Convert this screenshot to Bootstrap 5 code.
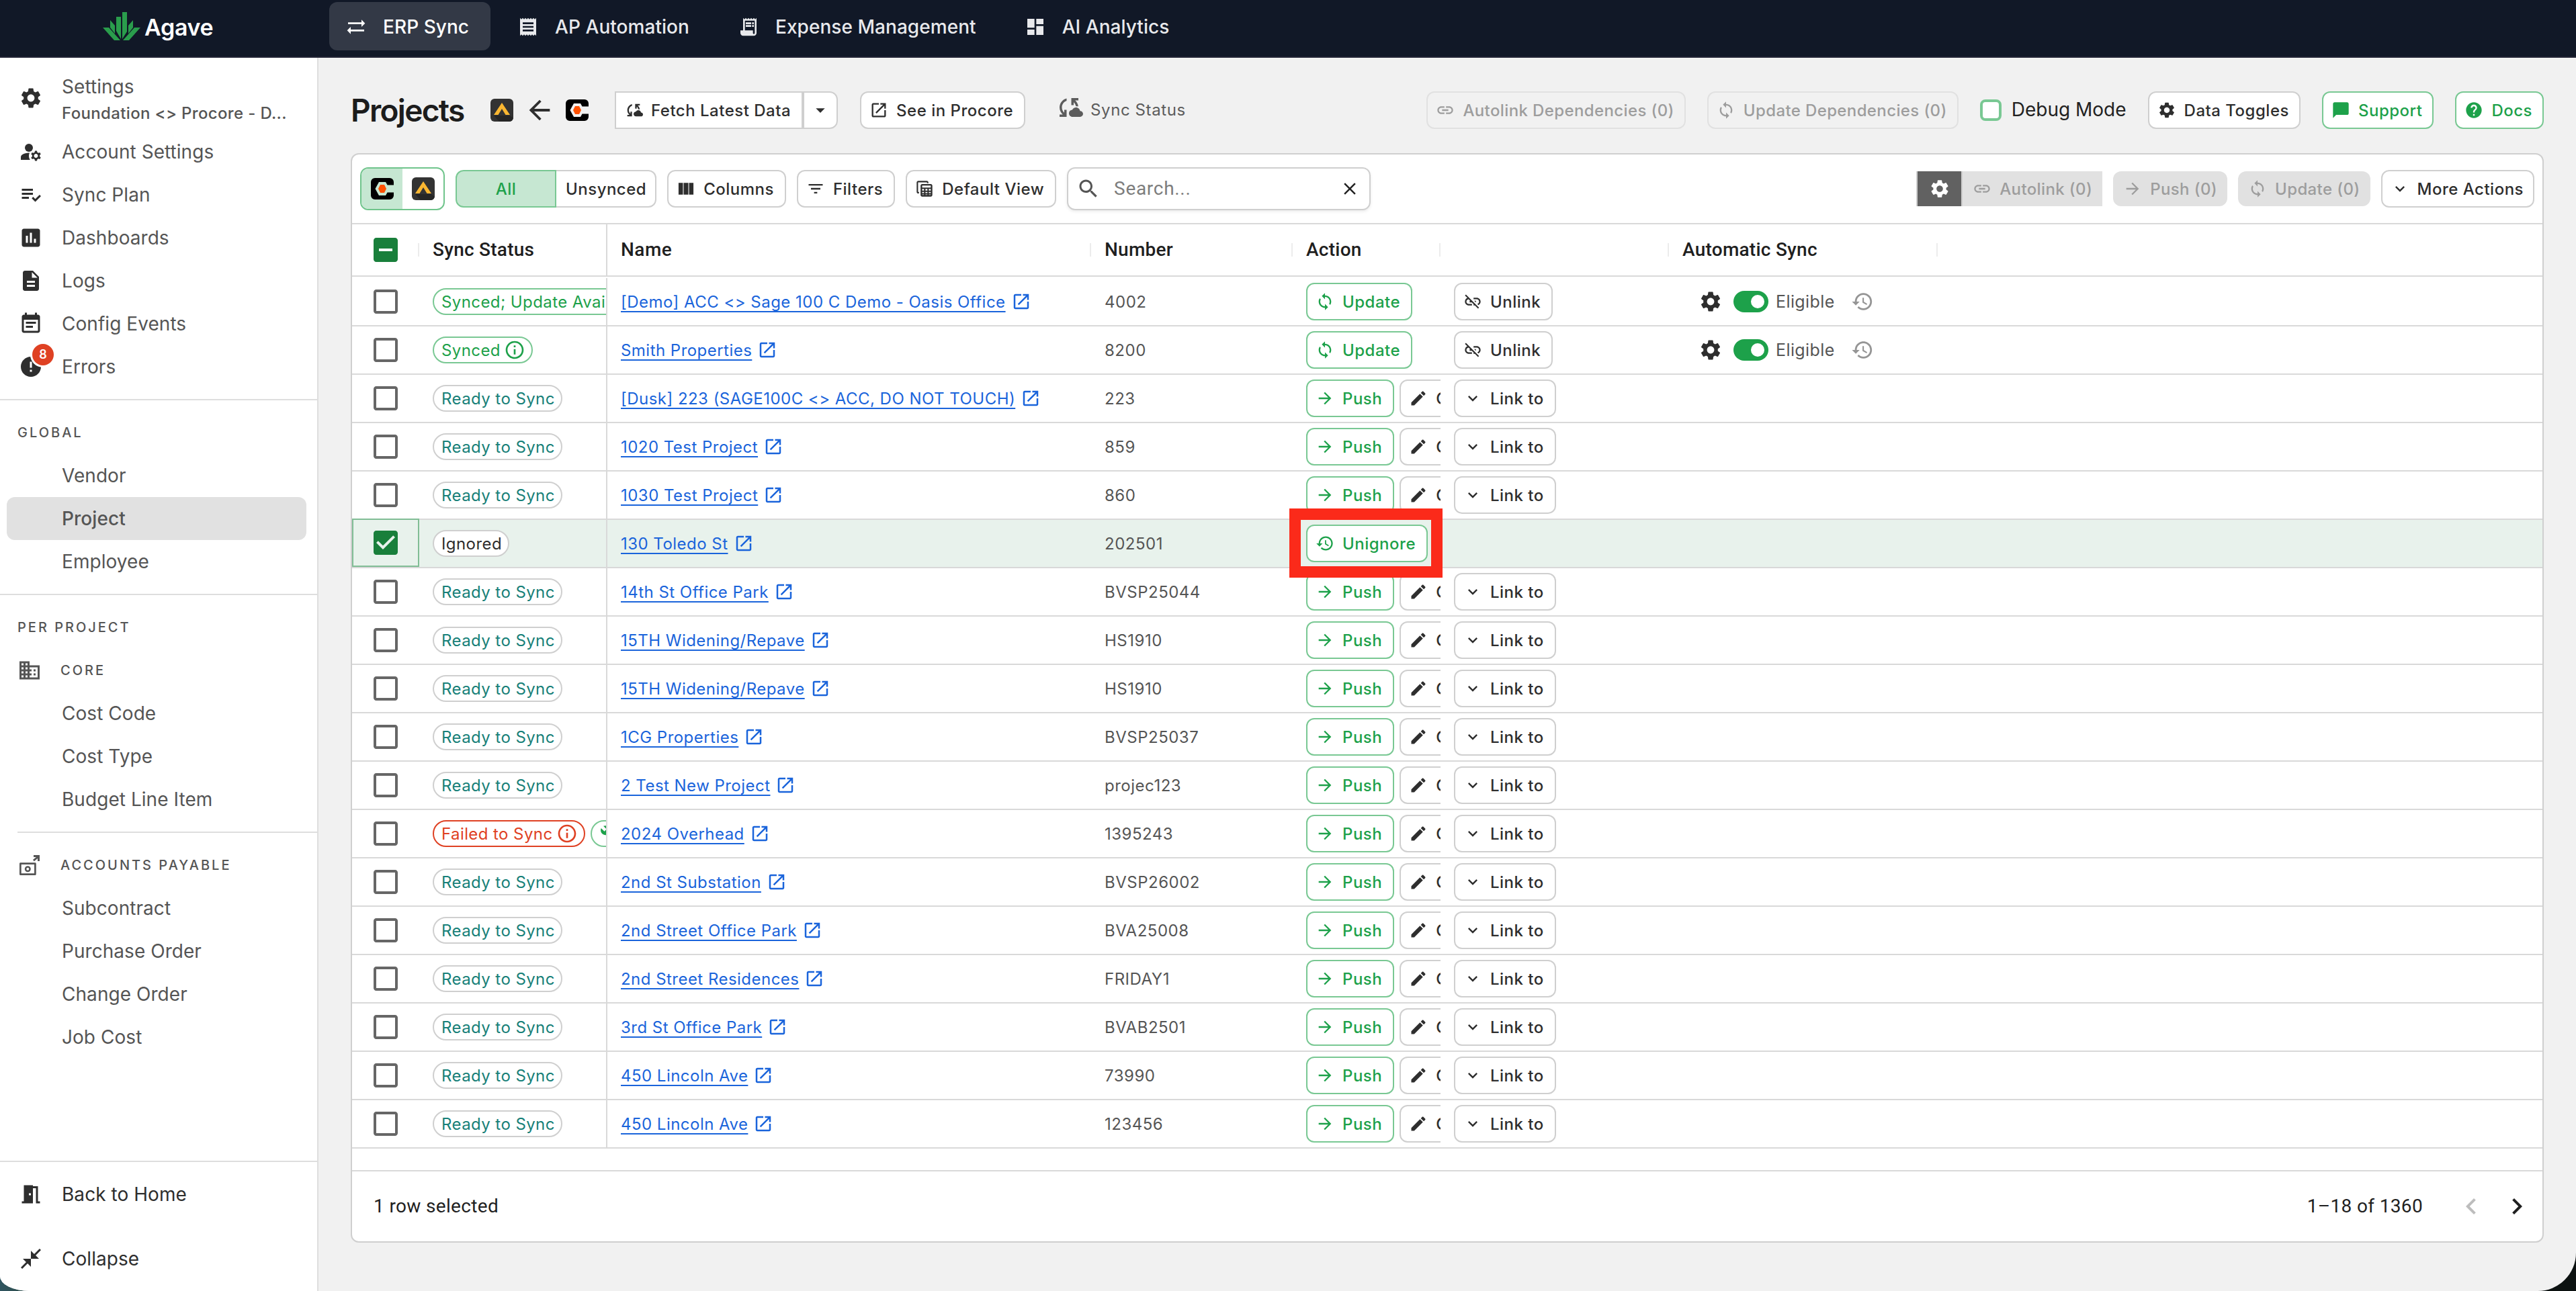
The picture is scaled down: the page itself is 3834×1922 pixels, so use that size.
<!DOCTYPE html>
<html lang="en">
<head>
    <meta charset="UTF-8">
    <meta name="viewport" content="width=device-width, initial-scale=1.0">
    <title>Agave - Projects</title>
    <link href="https://cdn.jsdelivr.net/npm/bootstrap@5.3.0/dist/css/bootstrap.min.css" rel="stylesheet">
    <style>
        html {
            background: linear-gradient(90deg, #2f5560 0, #2f4a40 60px, #0c1211 200px);
        }
        body {
            font-family: "Inter", "Roboto", sans-serif;
            font-size: 24px;
            line-height: 1.4;
            letter-spacing: 0.5px;
            color: #2e2e2e;
            background: transparent;
        }
        svg {
            display: block;
            flex: none;
            fill: currentColor;
        }
        .app {
            height: 1922px;
            background: #f1f1f1;
            border-radius: 0 0 57px 44px / 0 0 57px 22px;
            overflow: hidden;
        }

        /* Top navigation */
        .topbar {
            height: 86px;
            padding: 0 0 6px 153px;
            background: #111827;
            border-bottom: 2px solid #232536;
            color: #e8e9ec;
        }
        .brand {
            width: 337px;
            color: #fff;
            font-size: 34px;
            font-weight: 600;
            letter-spacing: -0.3px;
        }
        .brand span {
            margin: 3px 0 0 6px;
        }
        .topbar .nav-pill {
            height: 72px;
            padding: 3px 32px 0 24px;
            gap: 24px;
            border-radius: 12px;
            font-size: 28px;
            font-weight: 500;
            letter-spacing: 0.05px;
            color: inherit;
            text-decoration: none;
        }
        .topbar .nav-pill svg {
            margin-top: -2px;
        }
        .topbar .nav-pill.active {
            background: #333946;
            color: #fff;
        }

        /* Sidebar */
        .sidebar {
            width: 474px;
            padding-top: 12px;
            background: #fff;
            border-right: 2px solid #dedede;
            font-size: 28px;
            letter-spacing: 0.05px;
            color: #555;
        }
        .side-item {
            height: 64px;
            padding: 2px 0 0 28px;
            gap: 28px;
        }
        .side-item svg {
            margin-top: -2px;
            color: #2e2e2e;
        }
        .side-item.settings {
            height: 96px;
            padding-top: 5px;
        }
        .side-item.settings svg {
            margin-top: -5px;
        }
        .settings small {
            display: block;
            font-size: 24px;
            font-weight: 500;
            letter-spacing: 0.35px;
            line-height: 40px;
        }
        .settings div {
            line-height: 40px;
        }
        .side-sub {
            padding-left: 92px;
        }
        .side-sub.active {
            margin: 0 16px 0 10px;
            padding-left: 82px;
            border-radius: 12px;
            background: #e1e1e1;
            font-weight: 500;
        }
        .side-head {
            height: 64px;
            padding-left: 26px;
            gap: 28px;
            font-size: 20px;
            font-weight: 500;
            letter-spacing: 3px;
        }
        .side-rule {
            height: 2px;
            margin: 16px 0;
            background: #dedede;
        }
        .side-rule.inset {
            margin-left: 26px;
        }
        .side-foot {
            border-top: 2px solid #dedede;
            padding: 16px 0;
            gap: 32px;
            color: #2e2e2e;
        }
        .count {
            top: -18px;
            left: 20px;
            width: 32px;
            height: 32px;
            border-radius: 50%;
            background: #df4123;
            color: #fff;
            font-size: 18px;
            font-weight: 600;
            line-height: 32px;
            text-align: center;
            box-shadow: 0 0 0 3px #fff;
        }

        /* Page header */
        .page {
            padding: 50px 48px 72px;
        }
        .page-head {
            height: 56px;
            margin-bottom: 36px;
        }
        .page-head h1 {
            width: 208px;
            margin: 2px 0 0;
            font-size: 46px;
            font-weight: 600;
            letter-spacing: -1.7px;
            color: #1c1c1c;
        }
        .head-left {
            margin-left: 39px;
        }
        .head-right {
            gap: 32px;
        }
        .tool-btn {
            --bs-btn-disabled-opacity: 1;
            display: inline-flex;
            align-items: center;
            flex: none;
            height: 56px;
            padding: 2px 16px 0 12px;
            gap: 12px;
            border: 2px solid #cfcfcf;
            border-radius: 12px;
            background: #fff;
            color: #2e2e2e;
            font-size: 24px;
            font-weight: 500;
            letter-spacing: 0.5px;
            white-space: nowrap;
        }
        .tool-btn svg {
            margin-top: -2px;
        }
        .tool-btn.green {
            border-color: #79c893;
            color: #1da14a;
        }
        .tool-btn.off {
            border-color: #e1e1e1;
            color: #9d9d9d;
            letter-spacing: 0.38px;
        }
        .tool-btn.solid {
            height: 52px;
            padding: 2px 15px 0 15px;
            border: 0;
            background: #e1e1e1;
        }
        .head-right .tool-btn {
            padding-right: 15px;
        }
        .tool-btn.more-btn {
            padding-right: 14px;
        }
        .tool-btn.fetch-btn {
            border-radius: 0;
        }
        .tool-btn.caret-btn {
            padding-left: 8px;
            padding-right: 8px;
            border-radius: 0 12px 12px 0;
        }
        .tool-btn.see-btn {
            margin-left: 33px;
        }
        .tool-btn.all-btn {
            width: 150px;
            padding-left: 16px;
            border-radius: 12px 0 0 12px;
            background: #c6e7d2;
        }
        .tool-btn.unsynced-btn {
            padding-left: 14px;
            padding-right: 13px;
            border-left: 0;
            border-radius: 0 12px 12px 0;
        }
        .status {
            margin-left: 44px;
            gap: 11px;
            letter-spacing: 0.6px;
            color: #5c5c5c;
        }
        .status svg {
            margin-top: -9px;
        }
        .debug {
            gap: 15px;
            font-size: 28px;
            letter-spacing: 0;
            color: #222;
        }
        .debug i {
            width: 32px;
            height: 32px;
            border: 4px solid #79c893;
            border-radius: 8px;
            background: #fff;
        }

        /* Grid card */
        .grid-card {
            height: 1622px;
            border: 2px solid #cfcfcf;
            border-radius: 12px;
            background: #fff;
            overflow: hidden;
        }
        .toolbar {
            height: 104px;
            padding: 0 12px;
            gap: 16px;
            border-bottom: 2px solid #d9d9d9;
        }
        .side-toggle {
            width: 126px;
            height: 64px;
            border: 2px solid #6fc48b;
            border-radius: 12px;
            overflow: hidden;
        }
        .side-toggle .on {
            background: #c6e7d2;
        }
        .search {
            width: 452px;
            height: 64px;
            padding: 0 14px 0 12px;
            border: 2px solid #cfcfcf;
            border-radius: 12px;
            box-shadow: 0 2px 4px rgba(0, 0, 0, .08);
            font-family: "Roboto", sans-serif;
            font-size: 28px;
            letter-spacing: 0.7px;
            color: #7d7d7d;
        }
        .gear-btn {
            width: 69px;
            height: 52px;
            border: solid #cfcfcf;
            border-width: 0 2px;
            background: #616161;
            color: #fff;
        }
        .col-head {
            height: 78px;
            border-bottom: 2px solid #d9d9d9;
            font-family: "Roboto", sans-serif;
            font-size: 28px;
            font-weight: 500;
            letter-spacing: 0.25px;
            color: #1f1f1f;
        }
        .g-row {
            height: 72px;
            border-top: 2px solid #d9d9d9;
        }
        .g-row:first-child {
            border-top-color: transparent;
        }
        .g-row.picked {
            background: #e8f2ec;
            background-clip: padding-box;
        }
        .g-cell {
            position: relative;
            display: flex;
            align-items: center;
            flex: none;
            gap: 8px;
            padding: 0 20px;
            overflow: hidden;
            white-space: nowrap;
        }
        .c-check { width: 100px; padding: 0; justify-content: center; color: #666; }
        .c-status { width: 280px; border-right: 2px solid #d9d9d9; padding-right: 0; }
        .c-name { width: 720px; letter-spacing: 0.47px; }
        .c-number { width: 300px; color: #555; }
        .c-action { width: 220px; padding-right: 0; }
        .c-more { width: 340px; }
        .c-auto { width: 400px; padding-left: 44px; }
        #rows .c-name, #rows .c-number { padding-top: 2px; }
        .col-head .c-number { color: inherit; }
        .col-head .c-auto { padding-left: 20px; }
        .col-head .sep::after {
            content: "";
            position: absolute;
            right: 0;
            width: 2px;
            height: 20px;
            background: #ececec;
        }
        .picked .c-check {
            margin-top: -2px;
            border: 2px solid #80bd95;
        }
        .c-check .on {
            color: #197f3b;
        }
        .chip {
            display: inline-flex;
            align-items: center;
            flex: none;
            height: 40px;
            padding: 1px 9px 0 11px;
            gap: 4px;
            border: 2px solid #cfcfcf;
            border-radius: 20px;
            background: #fff;
            letter-spacing: 0.42px;
        }
        .chip.ready { color: #178078; }
        .chip.synced { color: #1da14a; border-color: #79c893; }
        .chip.failed { color: #df4123; border-color: #df4123; }
        .chip.wide { width: 320px; }
        .chip svg { margin: -1px 0 0 1px; }
        .c-name a {
            color: #1a64db;
            text-decoration-thickness: 2px;
            text-underline-offset: 5px;
            text-decoration-skip-ink: none;
        }
        .c-name svg {
            margin-top: -2px;
            color: #1a64db;
        }
        .edit-btn {
            width: 160px;
        }
        .switch {
            width: 52px;
            height: 32px;
            padding: 6px;
            margin: 0 3px 0 8px;
            border-radius: 16px;
            background: #1da14a;
        }
        .switch i {
            display: block;
            width: 20px;
            height: 20px;
            margin-left: auto;
            border-radius: 50%;
            background: #fff;
        }
        .eligible {
            width: 88px;
            margin-right: 16px;
            font-size: 25px;
            letter-spacing: 0.4px;
            color: #555;
        }
        /* Callout frame drawn over the grid */
        .callout {
            position: absolute;
            top: -17px;
            left: 1395px;
            width: 228px;
            height: 103px;
            border: 17px solid #fb2a1a;
            z-index: 2;
        }
        .grid-gap {
            height: 36px;
            border: solid #d9d9d9;
            border-width: 2px 0;
        }
        .grid-foot {
            padding: 0 14px 0 32px;
            font-family: "Roboto", sans-serif;
            font-size: 28px;
            letter-spacing: 0.35px;
            color: #1f1f1f;
        }
        .next-page {
            margin-left: 20px;
        }
    </style>
</head>
<body>
    <!-- Icon sprite -->
    <svg width="0" height="0" class="position-absolute">
        <symbol id="settings" viewBox="0 0 24 24"><path d="M19.14 12.94c.04-.3.06-.61.06-.94 0-.32-.02-.64-.07-.94l2.03-1.58c.18-.14.23-.41.12-.61l-1.92-3.32c-.12-.22-.37-.29-.59-.22l-2.39.96c-.5-.38-1.03-.7-1.62-.94L14.4 2.81c-.04-.24-.24-.41-.48-.41h-3.84c-.24 0-.43.17-.47.41L9.25 5.35c-.59.24-1.13.57-1.62.94L5.24 5.33c-.22-.08-.47 0-.59.22L2.74 8.87c-.12.21-.08.47.12.61l2.03 1.58c-.05.3-.09.63-.09.94s.02.64.07.94l-2.03 1.58c-.18.14-.23.41-.12.61l1.92 3.32c.12.22.37.29.59.22l2.39-.96c.5.38 1.03.7 1.62.94l.36 2.54c.05.24.24.41.48.41h3.84c.24 0 .44-.17.47-.41l.36-2.54c.59-.24 1.13-.56 1.62-.94l2.39.96c.22.08.47 0 .59-.22l1.92-3.32c.12-.22.07-.47-.12-.61l-2.01-1.58zM12 15.6c-1.98 0-3.6-1.62-3.6-3.6s1.62-3.6 3.6-3.6 3.6 1.62 3.6 3.6-1.62 3.6-3.6 3.6z"/></symbol>
        <symbol id="account" viewBox="0 0 24 24"><circle cx="10" cy="8" r="4"/><path d="M10.67 13.02c-.22-.01-.44-.02-.67-.02-2.42 0-4.68.67-6.61 1.82-.88.52-1.39 1.5-1.39 2.53V20h9.26c-.79-1.13-1.26-2.51-1.26-4 0-1.07.25-2.07.67-2.98zM20.75 16c0-.22-.03-.42-.06-.63l1.14-1.01-1-1.73-1.45.49c-.32-.27-.68-.48-1.08-.63L18 11h-2l-.3 1.49c-.4.15-.76.36-1.08.63l-1.45-.49-1 1.73 1.14 1.01c-.03.21-.06.41-.06.63s.03.42.06.63l-1.14 1.01 1 1.73 1.45-.49c.32.27.68.48 1.08.63L16 21h2l.3-1.49c.4-.15.76-.36 1.08-.63l1.45.49 1-1.73-1.14-1.01c.03-.21.06-.41.06-.63zM17 18c-1.1 0-2-.9-2-2s.9-2 2-2 2 .9 2 2-.9 2-2 2z"/></symbol>
        <symbol id="plan" viewBox="0 0 24 24"><path d="M3 10h11v2H3zM3 6h11v2H3zM3 14h7v2H3zM20.59 11.93l-4.25 4.24-2.12-2.12-1.41 1.41L16.34 19 22 13.34z"/></symbol>
        <symbol id="chart" viewBox="0 0 24 24"><path d="M19 3H5c-1.1 0-2 .9-2 2v14c0 1.1.9 2 2 2h14c1.1 0 2-.9 2-2V5c0-1.1-.9-2-2-2zM9 17H7v-7h2v7zm4 0h-2V7h2v10zm4 0h-2v-4h2v4z"/></symbol>
        <symbol id="file" viewBox="0 0 24 24"><path d="M14 2H6c-1.1 0-1.99.9-1.99 2L4 20c0 1.1.89 2 1.99 2H18c1.1 0 2-.9 2-2V8l-6-6zm2 16H8v-2h8v2zm0-4H8v-2h8v2zm-3-5V3.5L18.5 9H13z"/></symbol>
        <symbol id="event" viewBox="0 0 24 24"><path d="M19 3h-1V1h-2v2H8V1H6v2H5c-1.1 0-2 .9-2 2v14c0 1.1.9 2 2 2h14c1.1 0 2-.9 2-2V5c0-1.1-.9-2-2-2zm0 16H5V8h14v11zM7 10h10v2H7zM7 14h7v2H7z"/></symbol>
        <symbol id="error" viewBox="0 0 24 24"><path d="M12 2C6.48 2 2 6.48 2 12s4.48 10 10 10 10-4.48 10-10S17.52 2 12 2zm1 15h-2v-2h2v2zm0-4h-2V7h2v6z"/></symbol>
        <symbol id="building" viewBox="0 0 24 24"><path d="M12 7V3H2v18h20V7H12zM6 19H4v-2h2v2zm0-4H4v-2h2v2zm0-4H4V9h2v2zm0-4H4V5h2v2zm4 12H8v-2h2v2zm0-4H8v-2h2v2zm0-4H8V9h2v2zm0-4H8V5h2v2zm10 12h-8v-2h2v-2h-2v-2h2v-2h-2V9h8v10zm-2-8h-2v2h2v-2zm0 4h-2v2h2v-2z"/></symbol>
        <symbol id="payable" viewBox="0 0 24 24"><path fill-rule="evenodd" d="M2 10.5c0-.6.4-1 1-1h14.5c.6 0 1 .4 1 1V21c0 .6-.4 1-1 1H3c-.6 0-1-.4-1-1zm1.800.8v8.900h12.900v-8.900zM10.200 12.800a3 3 0 1 1 0 6 3 3 0 0 1 0-6zm0 1.700a1.300 1.300 0 1 0 0 2.600 1.300 1.300 0 0 0 0-2.600zM16 2h6v6h-2V5.400l-3.400 2.800-1.300-1.500L18.600 4H16z"/></symbol>
        <symbol id="door" viewBox="0 0 24 24"><path d="M14 6v15H3v-2h2V3h9v1h5v15h2v2h-4V6h-3zm-4 5v2h2v-2h-2z"/></symbol>
        <symbol id="shrink" viewBox="0 0 24 24"><path d="M22 3.41 16.71 8.7 20 12h-8V4l3.29 3.29L20.59 2 22 3.41zM3.41 22l5.29-5.29L12 20v-8H4l3.29 3.29L2 20.59 3.41 22z"/></symbol>
        <symbol id="swap" viewBox="0 0 24 24"><path d="m18 12 4-4-4-4v3H3v2h15zM6 12l-4 4 4 4v-3h15v-2H6z"/></symbol>
        <symbol id="receipt" viewBox="0 0 24 24"><path d="M18 17H6v-2h12v2zm0-4H6v-2h12v2zm0-4H6V7h12v2zM3 22l1.5-1.5L6 22l1.5-1.5L9 22l1.5-1.5L12 22l1.5-1.5L15 22l1.5-1.5L18 22l1.5-1.5L21 22V2l-1.5 1.5L18 2l-1.5 1.5L15 2l-1.5 1.5L12 2l-1.5 1.5L9 2 7.5 3.5 6 2 4.5 3.5 3 2v20z"/></symbol>
        <symbol id="expense" viewBox="0 0 24 24"><path d="M19.5 3.5 18 2l-1.5 1.5L15 2l-1.5 1.5L12 2l-1.5 1.5L9 2 7.5 3.5 6 2v14H3v3c0 1.66 1.34 3 3 3h12c1.66 0 3-1.34 3-3V2l-1.5 1.5zM19 19c0 .55-.45 1-1 1s-1-.45-1-1v-3H8V5h11v14zM9 7h6v2H9zM16 7h2v2h-2zM9 10h6v2H9zM16 10h2v2h-2z"/></symbol>
        <symbol id="dash" viewBox="0 0 24 24"><path d="M3 13h8V3H3v10zm0 8h8v-6H3v6zm10 0h8V11h-8v10zm0-18v6h8V3h-8z"/></symbol>
        <symbol id="sync" viewBox="0 0 24 24"><path d="M12 4V1L8 5l4 4V6c3.31 0 6 2.69 6 6 0 1.01-.25 1.97-.7 2.8l1.46 1.46C19.54 15.03 20 13.57 20 12c0-4.42-3.58-8-8-8zm0 14c-3.31 0-6-2.69-6-6 0-1.01.25-1.97.7-2.8L5.24 7.74C4.46 8.97 4 10.43 4 12c0 4.42 3.58 8 8 8v3l4-4-4-4v3z"/></symbol>
        <symbol id="link" viewBox="0 0 24 24"><path d="M3.9 12c0-1.71 1.39-3.1 3.1-3.1h4V7H7c-2.76 0-5 2.24-5 5s2.24 5 5 5h4v-1.9H7c-1.71 0-3.1-1.39-3.1-3.1zM8 13h8v-2H8v2zm9-6h-4v1.9h4c1.71 0 3.1 1.39 3.1 3.1s-1.39 3.1-3.1 3.1h-4V17h4c2.76 0 5-2.24 5-5s-2.24-5-5-5z"/></symbol>
        <symbol id="unlink" viewBox="0 0 24 24"><path d="M17 7h-4v1.9h4c1.71 0 3.1 1.39 3.1 3.1 0 1.43-.98 2.63-2.31 2.98l1.46 1.46C20.88 15.61 22 13.95 22 12c0-2.76-2.24-5-5-5zm-1 4h-2.19l2 2H16v-2zM2 4.27l3.11 3.11C3.29 8.12 2 9.91 2 12c0 2.76 2.24 5 5 5h4v-1.9H7c-1.71 0-3.1-1.39-3.1-3.1 0-1.59 1.21-2.9 2.76-3.07L8.73 11H8v2h2.73L13 15.27V17h1.73l4.01 4L20 19.74 3.27 3 2 4.27z"/></symbol>
        <symbol id="right" viewBox="0 0 24 24"><path d="M12 4l-1.41 1.41L16.17 11H4v2h12.17l-5.58 5.59L12 20l8-8z"/></symbol>
        <symbol id="left" viewBox="0 0 24 24"><path d="M20 11H7.83l5.59-5.59L12 4l-8 8 8 8 1.41-1.41L7.83 13H20v-2z"/></symbol>
        <symbol id="pencil" viewBox="0 0 24 24"><path d="M3 17.25V21h3.75L17.81 9.94l-3.75-3.75L3 17.25zM20.71 7.04c.39-.39.39-1.02 0-1.41l-2.34-2.34c-.39-.39-1.02-.39-1.41 0l-1.83 1.83 3.75 3.75 1.83-1.83z"/></symbol>
        <symbol id="down" viewBox="0 0 24 24"><path d="M16.59 8.59 12 13.17 7.41 8.59 6 10l6 6 6-6z"/></symbol>
        <symbol id="caret" viewBox="0 0 24 24"><path d="M7 10l5 5 5-5z"/></symbol>
        <symbol id="open" viewBox="0 0 24 24"><path d="M19 19H5V5h7V3H5c-1.11 0-2 .9-2 2v14c0 1.1.89 2 2 2h14c1.1 0 2-.9 2-2v-7h-2v7zM14 3v2h3.59l-9.83 9.83 1.41 1.41L19 6.41V10h2V3h-7z"/></symbol>
        <symbol id="info" viewBox="0 0 24 24"><path d="M11 7h2v2h-2zm0 4h2v6h-2zm1-9C6.48 2 2 6.48 2 12s4.48 10 10 10 10-4.48 10-10S17.52 2 12 2zm0 18c-4.41 0-8-3.59-8-8s3.59-8 8-8 8 3.59 8 8-3.59 8-8 8z"/></symbol>
        <symbol id="history" viewBox="0 0 24 24"><path d="M13 3c-4.97 0-9 4.03-9 9H1l3.89 3.89.07.14L9 12H6c0-3.87 3.13-7 7-7s7 3.13 7 7-3.13 7-7 7c-1.93 0-3.68-.79-4.94-2.06l-1.42 1.42C8.27 19.99 10.51 21 13 21c4.97 0 9-4.03 9-9s-4.03-9-9-9zm-1 5v5l4.28 2.54.72-1.21-3.5-2.08V8H12z"/></symbol>
        <symbol id="chat" viewBox="0 0 24 24"><path d="M20 2H4c-1.1 0-2 .9-2 2v18l4-4h14c1.1 0 2-.9 2-2V4c0-1.1-.9-2-2-2z"/></symbol>
        <symbol id="help" viewBox="0 0 24 24"><path d="M12 2C6.48 2 2 6.48 2 12s4.48 10 10 10 10-4.48 10-10S17.52 2 12 2zm1 17h-2v-2h2v2zm2.07-7.75-.9.92C13.45 12.9 13 13.5 13 15h-2v-.5c0-1.1.45-2.1 1.17-2.83l1.24-1.26c.37-.36.59-.86.59-1.41 0-1.1-.9-2-2-2s-2 .9-2 2H8c0-2.21 1.79-4 4-4s4 1.79 4 4c0 .88-.36 1.68-.93 2.25z"/></symbol>
        <symbol id="cloud" viewBox="0 0 24 24"><path d="M21.5 14.98c-.02 0-.03 0-.05.01C21.2 13.3 19.76 12 18 12c-1.4 0-2.6.83-3.16 2.02C13.26 14.1 12 15.4 12 17c0 1.66 1.34 3 3 3l6.5-.02c1.38 0 2.5-1.12 2.5-2.5s-1.12-2.5-2.5-2.5zM10 4.26v2.09C7.67 7.18 6 9.39 6 12c0 1.77.78 3.34 2 4.44V14h2v6H4v-2h2.73C5.06 16.54 4 14.4 4 12c0-3.73 2.55-6.85 6-7.74zM20 6h-2.73c1.43 1.26 2.41 3.01 2.66 5h-2.02c-.23-1.36-.93-2.55-1.91-3.44V10h-2V4h6v2z"/></symbol>
        <symbol id="columns" viewBox="0 0 24 24"><path d="M2.5 4.5h5.6v15H2.5zM9 4.5h6v15H9zM15.9 4.5h5.6v15h-5.6z"/></symbol>
        <symbol id="filter" viewBox="0 0 24 24"><path d="M10 18h4v-2h-4v2zM3 6v2h18V6H3zm3 7h12v-2H6v2z"/></symbol>
        <symbol id="views" viewBox="0 0 24 24"><path fill-rule="evenodd" d="M9 6h11c1.1 0 2 .9 2 2v12c0 1.1-.9 2-2 2H9c-1.1 0-2-.9-2-2V8c0-1.1.9-2 2-2zm0 2v2.4h11V8zM9 12.3v2h2.4v-2zm4.2 0v2h2.5v-2zm4.3 0v2H20v-2zM9 16v1.6h2.4V16zm4.2 0v1.6h2.5V16zm4.3 0v1.6H20V16zM9 19.2v.8h2.4v-.8zm4.2 0v.8h2.5v-.8zm4.3 0v.8H20v-.8zM2 4c0-1.1.9-2 2-2h11c1.1 0 2 .9 2 2v1h-1.800V3.800H3.800V16H5v2H4c-1.100 0-2-.9-2-2z"/></symbol>
        <symbol id="search" viewBox="0 0 24 24"><path d="M15.5 14h-.79l-.28-.27C15.41 12.59 16 11.11 16 9.5 16 5.91 13.09 3 9.5 3S3 5.91 3 9.5 5.91 16 9.5 16c1.61 0 3.09-.59 4.23-1.57l.27.28v.79l5 4.99L20.49 19l-4.99-5zm-6 0C7.01 14 5 11.99 5 9.5S7.01 5 9.5 5 14 7.01 14 9.5 11.99 14 9.5 14z"/></symbol>
        <symbol id="close" viewBox="0 0 24 24"><path d="M19 6.41 17.59 5 12 10.59 6.41 5 5 6.41 10.59 12 5 17.59 6.41 19 12 13.41 17.59 19 19 17.59 13.41 12z"/></symbol>
        <symbol id="box" viewBox="0 0 24 24"><path d="M19 5v14H5V5h14m0-2H5c-1.1 0-2 .9-2 2v14c0 1.1.9 2 2 2h14c1.1 0 2-.9 2-2V5c0-1.1-.9-2-2-2z"/></symbol>
        <symbol id="box-on" viewBox="0 0 24 24"><path d="M19 3H5c-1.11 0-2 .9-2 2v14c0 1.1.89 2 2 2h14c1.11 0 2-.9 2-2V5c0-1.1-.89-2-2-2zm-9 14-5-5 1.41-1.41L10 14.17l7.59-7.59L19 8l-9 9z"/></symbol>
        <symbol id="box-some" viewBox="0 0 24 24"><path d="M19 3H5c-1.1 0-2 .9-2 2v14c0 1.1.9 2 2 2h14c1.1 0 2-.9 2-2V5c0-1.1-.9-2-2-2zm-2 10H7v-2h10v2z"/></symbol>
        <symbol id="prev" viewBox="0 0 24 24"><path d="M15.41 7.41 14 6l-6 6 6 6 1.41-1.41L10.83 12z"/></symbol>
        <symbol id="next" viewBox="0 0 24 24"><path d="M10 6 8.59 7.41 13.17 12l-4.58 4.59L10 18l6-6z"/></symbol>
        <symbol id="wrench" viewBox="0 0 24 24"><path d="m22.7 19-9.1-9.1c.9-2.3.4-5-1.5-6.9-2-2-5-2.4-7.4-1.3L9 6 6 9 1.6 4.7C.4 7.1.9 10.1 2.9 12.1c1.9 1.9 4.6 2.4 6.9 1.5l9.1 9.1c.4.4 1 .4 1.4 0l2.3-2.3c.5-.4.5-1.1.1-1.4z"/></symbol>
        <symbol id="procore" viewBox="0 0 34 34"><path fill="#000" d="M6 1h22a6 6 0 0 1 6 6v4.5h-9.5L22 7H12L6.5 17 12 27h10l2.5-4.5H34V27a6 6 0 0 1-6 6H6a6 6 0 0 1-6-6V7a6 6 0 0 1 6-6z"/><path fill="#ff5100" d="M11 17l3-6h6l3 6-3 6h-6z"/></symbol>
        <symbol id="foundation" viewBox="0 0 34 34"><rect width="34" height="34" rx="6" fill="#333"/><path fill="#262626" d="M5 25h24l5 4v-1a6 6 0 0 1-6 6H13z"/><path fill="#fbb731" d="M17 6l12 18h-6.5L17 15l-5.5 9H5z"/></symbol>
    </svg>

    <div class="app d-flex flex-column">
        <nav class="topbar d-flex align-items-center">
            <div class="brand d-flex align-items-center">
                <svg width="56" height="42" viewBox="0 0 56 42"><path fill="#2a9d4c" d="M29 0h7v29l-7 11zM20 7h7v33l-7-12zM11 12l7 8v12l-7-9zM45 12l-7 8v12l7-9zM0 23h9l17 19h-9zM56 23h-9L30 42h9z"/></svg>
                <span>Agave</span>
            </div>
            <div class="d-flex gap-3">
                <a class="nav-pill active d-flex align-items-center"><svg width="32" height="32"><use href="#swap"/></svg>ERP Sync</a>
                <a class="nav-pill d-flex align-items-center"><svg width="32" height="32"><use href="#receipt"/></svg>AP Automation</a>
                <a class="nav-pill d-flex align-items-center"><svg width="32" height="32"><use href="#expense"/></svg>Expense Management</a>
                <a class="nav-pill d-flex align-items-center"><svg width="32" height="32"><use href="#dash"/></svg>AI Analytics</a>
            </div>
        </nav>

        <div class="d-flex flex-grow-1">
            <aside class="sidebar d-flex flex-column flex-shrink-0">
                <div class="side-item settings d-flex align-items-center"><svg width="36" height="36"><use href="#settings"/></svg><div>Settings<small>Foundation &lt;&gt; Procore - D...</small></div></div>
                <div class="side-item d-flex align-items-center"><svg width="36" height="36"><use href="#account"/></svg>Account Settings</div>
                <div class="side-item d-flex align-items-center"><svg width="36" height="36"><use href="#plan"/></svg>Sync Plan</div>
                <div class="side-item d-flex align-items-center"><svg width="36" height="36"><use href="#chart"/></svg>Dashboards</div>
                <div class="side-item d-flex align-items-center"><svg width="36" height="36"><use href="#file"/></svg>Logs</div>
                <div class="side-item d-flex align-items-center"><svg width="36" height="36"><use href="#event"/></svg>Config Events</div>
                <div class="side-item d-flex align-items-center"><span class="position-relative"><svg width="36" height="36"><use href="#error"/></svg><span class="count position-absolute">8</span></span>Errors</div>
                <div class="side-rule"></div>
                <div class="side-head d-flex align-items-center">GLOBAL</div>
                <div class="side-item side-sub d-flex align-items-center">Vendor</div>
                <div class="side-item side-sub active d-flex align-items-center">Project</div>
                <div class="side-item side-sub d-flex align-items-center">Employee</div>
                <div class="side-rule"></div>
                <div class="side-head d-flex align-items-center">PER PROJECT</div>
                <div class="side-head d-flex align-items-center"><svg width="36" height="36"><use href="#building"/></svg>CORE</div>
                <div class="side-item side-sub d-flex align-items-center">Cost Code</div>
                <div class="side-item side-sub d-flex align-items-center">Cost Type</div>
                <div class="side-item side-sub d-flex align-items-center">Budget Line Item</div>
                <div class="side-rule inset"></div>
                <div class="side-head d-flex align-items-center"><svg width="36" height="36"><use href="#payable"/></svg>ACCOUNTS PAYABLE</div>
                <div class="side-item side-sub d-flex align-items-center">Subcontract</div>
                <div class="side-item side-sub d-flex align-items-center">Purchase Order</div>
                <div class="side-item side-sub d-flex align-items-center">Change Order</div>
                <div class="side-item side-sub d-flex align-items-center">Job Cost</div>
                <div class="side-foot d-flex flex-column mt-auto">
                    <div class="side-item d-flex align-items-center"><svg width="36" height="36"><use href="#door"/></svg>Back to Home</div>
                    <div class="side-item d-flex align-items-center"><svg width="36" height="36"><use href="#shrink"/></svg>Collapse</div>
                </div>
            </aside>

            <main class="page flex-grow-1">
                <div class="page-head d-flex align-items-center">
                    <h1>Projects</h1>
                    <svg width="34" height="34"><use href="#foundation"/></svg>
                    <svg class="mx-3" width="46" height="46"><use href="#left"/></svg>
                    <svg width="34" height="34"><use href="#procore"/></svg>
                    <div class="head-left d-flex align-items-center">
                        <button class="btn tool-btn fetch-btn"><svg width="28" height="28"><use href="#cloud"/></svg>Fetch Latest Data</button>
                        <button class="btn tool-btn caret-btn"><svg width="32" height="32"><use href="#caret"/></svg></button>
                        <button class="btn tool-btn see-btn"><svg width="28" height="28"><use href="#open"/></svg>See in Procore</button>
                        <span class="status d-flex align-items-center"><svg width="42" height="42"><use href="#cloud"/></svg>Sync Status</span>
                    </div>
                    <div class="head-right d-flex align-items-center ms-auto">
                        <button class="btn tool-btn off" disabled><svg width="28" height="28"><use href="#link"/></svg>Autolink Dependencies (0)</button>
                        <button class="btn tool-btn off" disabled><svg width="28" height="28"><use href="#sync"/></svg>Update Dependencies (0)</button>
                        <label class="debug d-flex align-items-center"><i></i>Debug Mode</label>
                        <button class="btn tool-btn"><svg width="28" height="28"><use href="#settings"/></svg>Data Toggles</button>
                        <button class="btn tool-btn green"><svg width="28" height="28"><use href="#chat"/></svg>Support</button>
                        <button class="btn tool-btn green"><svg width="28" height="28"><use href="#help"/></svg>Docs</button>
                    </div>
                </div>

                <div class="grid-card d-flex flex-column">
                    <div class="toolbar d-flex align-items-center flex-shrink-0">
                        <div class="side-toggle d-flex">
                            <span class="on w-50 d-flex align-items-center justify-content-center"><svg width="34" height="34"><use href="#procore"/></svg></span>
                            <span class="w-50 d-flex align-items-center justify-content-center"><svg width="34" height="34"><use href="#foundation"/></svg></span>
                        </div>
                        <div class="d-flex">
                            <button class="btn tool-btn all-btn green justify-content-center">All</button>
                            <button class="btn tool-btn unsynced-btn">Unsynced</button>
                        </div>
                        <button class="btn tool-btn"><svg width="28" height="28"><use href="#columns"/></svg>Columns</button>
                        <button class="btn tool-btn"><svg width="28" height="28"><use href="#filter"/></svg>Filters</button>
                        <button class="btn tool-btn"><svg width="28" height="28"><use href="#views"/></svg>Default View</button>
                        <div class="search d-flex align-items-center"><svg width="36" height="36" style="color: #555"><use href="#search"/></svg><span class="ms-3 ps-1 me-auto">Search...</span><svg width="30" height="30" style="color: #222"><use href="#close"/></svg></div>
                        <div class="d-flex ms-auto">
                            <span class="gear-btn d-flex align-items-center justify-content-center"><svg width="32" height="32"><use href="#settings"/></svg></span>
                            <button class="btn tool-btn off solid rounded-0" disabled><svg width="28" height="28"><use href="#link"/></svg>Autolink (0)</button>
                        </div>
                        <button class="btn tool-btn off solid" disabled><svg width="28" height="28"><use href="#right"/></svg>Push (0)</button>
                        <button class="btn tool-btn off solid" disabled><svg width="28" height="28"><use href="#sync"/></svg>Update (0)</button>
                        <button class="btn tool-btn more-btn"><svg width="28" height="28"><use href="#down"/></svg>More Actions</button>
                    </div>

                    <div class="col-head d-flex flex-shrink-0">
                        <div class="g-cell c-check sep"><svg class="on" width="48" height="48"><use href="#box-some"/></svg></div>
                        <div class="g-cell c-status">Sync Status</div>
                        <div class="g-cell c-name sep">Name</div>
                        <div class="g-cell c-number sep">Number</div>
                        <div class="g-cell c-action sep">Action</div>
                        <div class="g-cell c-more sep"></div>
                        <div class="g-cell c-auto sep">Automatic Sync</div>
                    </div>
                    <div id="rows"></div>
                    <div class="grid-gap flex-shrink-0"></div>
                    <div class="grid-foot d-flex align-items-center flex-grow-1">
                        <span class="me-auto">1 row selected</span>
                        <span>1–18 of 1360</span>
                        <svg class="ms-5" width="48" height="48" style="color: #bdbdbd"><use href="#prev"/></svg>
                        <svg class="next-page" width="48" height="48"><use href="#next"/></svg>
                    </div>
                </div>
            </main>
        </div>
    </div>

    <script src="https://cdn.jsdelivr.net/npm/bootstrap@5.3.0/dist/js/bootstrap.bundle.min.js"></script>
    <script>
        const projects = [
            ['update', '[Demo] ACC <> Sage 100 C Demo - Oasis Office', '4002'],
            ['synced', 'Smith Properties', '8200'],
            ['ready', '[Dusk] 223 (SAGE100C <> ACC, DO NOT TOUCH)', '223'],
            ['ready', '1020 Test Project', '859'],
            ['ready', '1030 Test Project', '860'],
            ['ignored', '130 Toledo St', '202501'],
            ['ready', '14th St Office Park', 'BVSP25044'],
            ['ready', '15TH Widening/Repave', 'HS1910'],
            ['ready', '15TH Widening/Repave', 'HS1910'],
            ['ready', '1CG Properties', 'BVSP25037'],
            ['ready', '2 Test New Project', 'projec123'],
            ['failed', '2024 Overhead', '1395243'],
            ['ready', '2nd St Substation', 'BVSP26002'],
            ['ready', '2nd Street Office Park', 'BVA25008'],
            ['ready', '2nd Street Residences', 'FRIDAY1'],
            ['ready', '3rd St Office Park', 'BVAB2501'],
            ['ready', '450 Lincoln Ave', '73990'],
            ['ready', '450 Lincoln Ave', '123456']
        ];

        const icon = (name, size) => `<svg width="${size}" height="${size}"><use href="#${name}"/></svg>`;
        const button = (name, label, cls = '') => `<button class="btn tool-btn ${cls}">${icon(name, 28)}${label}</button>`;
        const escapeHtml = (text) => text.replace(/</g, '&lt;').replace(/>/g, '&gt;');

        const chips = {
            update: '<span class="chip synced wide">Synced; Update Avai</span>',
            synced: `<span class="chip synced">Synced ${icon('info', 32)}</span>`,
            ready: '<span class="chip ready">Ready to Sync</span>',
            ignored: '<span class="chip">Ignored</span>',
            failed: `<span class="chip failed">Failed to Sync ${icon('info', 32)}</span><span class="chip synced">${icon('wrench', 26)}</span>`
        };

        document.getElementById('rows').innerHTML = projects.map(([state, name, number]) => {
            const linked = state === 'update' || state === 'synced';
            const ignored = state === 'ignored';
            let action = button('right', 'Push', 'green') + button('pencil', 'C', 'edit-btn justify-content-start');
            let more = button('down', 'Link to');
            let auto = '';
            if (linked) {
                action = button('sync', 'Update', 'green');
                more = button('unlink', 'Unlink');
                auto = `${icon('settings', 36)}<span class="switch"><i></i></span><span class="eligible">Eligible</span><span class="opacity-50">${icon('history', 34)}</span>`;
            }
            if (ignored) {
                action = button('history', 'Unignore', 'green');
                more = '';
            }
            return `
                <div class="g-row d-flex position-relative ${ignored ? 'picked' : ''}">
                    <div class="g-cell c-check">${ignored ? `<span class="on">${icon('box-on', 48)}</span>` : icon('box', 48)}</div>
                    <div class="g-cell c-status">${chips[state]}</div>
                    <div class="g-cell c-name"><a href="#">${escapeHtml(name)}</a>${icon('open', 30)}</div>
                    <div class="g-cell c-number">${number}</div>
                    <div class="g-cell c-action">${action}</div>
                    <div class="g-cell c-more">${more}</div>
                    <div class="g-cell c-auto">${auto}</div>
                    ${ignored ? '<div class="callout"></div>' : ''}
                </div>`;
        }).join('');
    </script>
</body>
</html>
